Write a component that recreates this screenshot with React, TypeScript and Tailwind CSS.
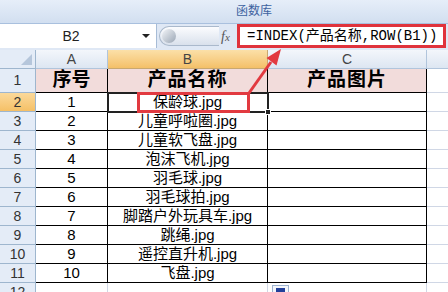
const items = [
  '保龄球.jpg',
  '儿童呼啦圈.jpg',
  '儿童软飞盘.jpg',
  '泡沫飞机.jpg',
  '羽毛球.jpg',
  '羽毛球拍.jpg',
  '脚踏户外玩具车.jpg',
  '跳绳.jpg',
  '遥控直升机.jpg',
  '飞盘.jpg',
];

function RowHead({ n, active }: { n: number; active?: boolean }) {
  return (
    <div
      className={
        'flex items-center justify-center border-r border-b border-[#9eb6ce] text-[14px] text-[#333] ' +
        (active ? 'bg-gradient-to-b from-[#fbd99a] to-[#f5c066]' : 'bg-[#e4ecf7]')
      }
    >
      {n}
    </div>
  );
}

export default function App() {
  return (
    <div className="relative w-[448px] h-[292px] overflow-hidden bg-white font-['Liberation_Sans','Noto_Sans_CJK_SC',sans-serif]">
      {/* ribbon group label */}
      <div className="h-[24px] bg-gradient-to-b from-[#e6eef9] to-[#d2dff0] border-b border-[#a9c0de] flex">
        <span className="ml-[236px] mt-[3px] text-[12px] leading-[16px] text-[#3d62a0]">函数库</span>
      </div>

      {/* formula bar */}
      <div className="flex h-[24px] bg-[#dfe8f5]">
        <div className="relative w-[157px] bg-white border-r border-[#a7bcd6] flex items-center justify-center text-[14px] text-[#222]">
          <span className="-ml-[14px]">B2</span>
          <span className="absolute right-[6px] top-[10px] w-0 h-0 border-l-[4px] border-r-[4px] border-t-[4px] border-l-transparent border-r-transparent border-t-[#222]" />
        </div>
        <div className="w-[80px] flex items-center">
          <div className="relative h-[20px] w-[60px] ml-[2px] rounded-l-full bg-gradient-to-b from-[#fbfcfe] to-[#d9e1ec] border border-r-0 border-[#aab9cc]">
            <span className="absolute left-[2px] top-[2px] w-[14px] h-[14px] rounded-full bg-gradient-to-br from-[#f4f6f9] to-[#9aa6b5]" />
          </div>
          <span className="ml-[2px] font-['Liberation_Serif',serif] italic text-[14px] text-[#555]">
            f<span className="text-[11px]">x</span>
          </span>
        </div>
        <div className="w-[209px] border-[3px] border-[#e0333c] bg-white flex items-center pl-[7px] font-['Liberation_Mono','Noto_Sans_CJK_SC',monospace] text-[14px] text-black whitespace-nowrap">
          =INDEX(产品名称,ROW(B1))
        </div>
      </div>
      <div className="h-[2px] bg-[#dfe8f5]" />

      {/* sheet */}
      <div className="grid grid-cols-[36px_72px_160px_159px_1fr] grid-rows-[19px_24px_repeat(10,19px)_1fr] h-[242px]">
        {/* column headers */}
        <div className="relative bg-[#e4ecf7] border-r border-b border-[#9eb6ce]">
          <span className="absolute right-[3px] bottom-[3px] w-0 h-0 border-l-[11px] border-t-[11px] border-l-transparent border-t-transparent border-b-0 border-r-0 [border-bottom:11px_solid_#b5c6db]" />
        </div>
        <div className="flex items-center justify-center bg-gradient-to-b from-[#f3f6fb] to-[#dde6f2] border-r border-b border-[#b1c5dc] text-[14px] text-[#444]">A</div>
        <div className="flex items-center justify-center bg-gradient-to-b from-[#fbe0a8] to-[#f4c068] border-r border-b border-[#c9a870] text-[14px] text-[#444]">B</div>
        <div className="flex items-center justify-center bg-gradient-to-b from-[#f3f6fb] to-[#dde6f2] border-r border-b border-[#b1c5dc] text-[14px] text-[#444]">C</div>
        <div className="bg-gradient-to-b from-[#f3f6fb] to-[#dde6f2] border-b border-[#b1c5dc]" />

        {/* row 1 */}
        <RowHead n={1} />
        <div className="flex items-center justify-center bg-[#f2dcdb] border-r border-b border-black text-[19px] font-bold text-black">序号</div>
        <div className="flex items-center justify-center bg-[#f2dcdb] border-r border-b border-black text-[19px] font-bold text-black tracking-[1px]">产品名称</div>
        <div className="flex items-center justify-center bg-[#f2dcdb] border-r border-b border-black text-[19px] font-bold text-black tracking-[1px]">产品图片</div>
        <div className="border-b border-[#d0d7e5]" />

        {items.map((name, i) => (
          <div key={name} className="contents">
            <RowHead n={i + 2} active={i === 0} />
            <div className="flex items-center justify-center border-r border-b border-black text-[15px] text-black">{i + 1}</div>
            <div className="flex items-center justify-center border-r border-b border-black text-[15px] text-black whitespace-nowrap">{name}</div>
            <div className="border-r border-b border-black" />
            <div className="border-b border-[#d0d7e5]" />
          </div>
        ))}

        {/* row 12 */}
        <div className="flex items-start justify-center bg-[#e4ecf7] border-r border-[#9eb6ce] text-[14px] leading-[18px] text-[#333]">12</div>
        <div className="border-r border-[#d0d7e5]" />
        <div className="border-r border-[#d0d7e5]" />
        <div className="border-r border-[#d0d7e5]" />
        <div />
      </div>

      {/* active cell B2 */}
      <div className="absolute left-[107px] top-[92px] w-[162px] h-[21px] border-2 border-[#222]" />
      <div className="absolute left-[265px] top-[109px] w-[6px] h-[6px] bg-[#222] border border-white" />

      {/* paste options button */}
      <div className="absolute left-[272px] top-[285px] w-[17px] h-[14px] border border-[#9db3d0] bg-[#f3f6fb]">
        <div className="ml-[3px] mt-[2px] w-[9px] h-[9px] bg-[#23409a]" />
      </div>

      {/* red annotation */}
      <svg className="absolute left-0 top-0 pointer-events-none" width="448" height="292">
        <rect x="138.5" y="93.5" width="110" height="18" fill="none" stroke="#e23a40" strokeWidth="3" />
        <line x1="249" y1="93" x2="271" y2="62" stroke="#e23a40" strokeWidth="3" />
        <polygon points="281,49 276.5,65.5 266.5,58" fill="#e23a40" />
      </svg>
    </div>
  );
}
